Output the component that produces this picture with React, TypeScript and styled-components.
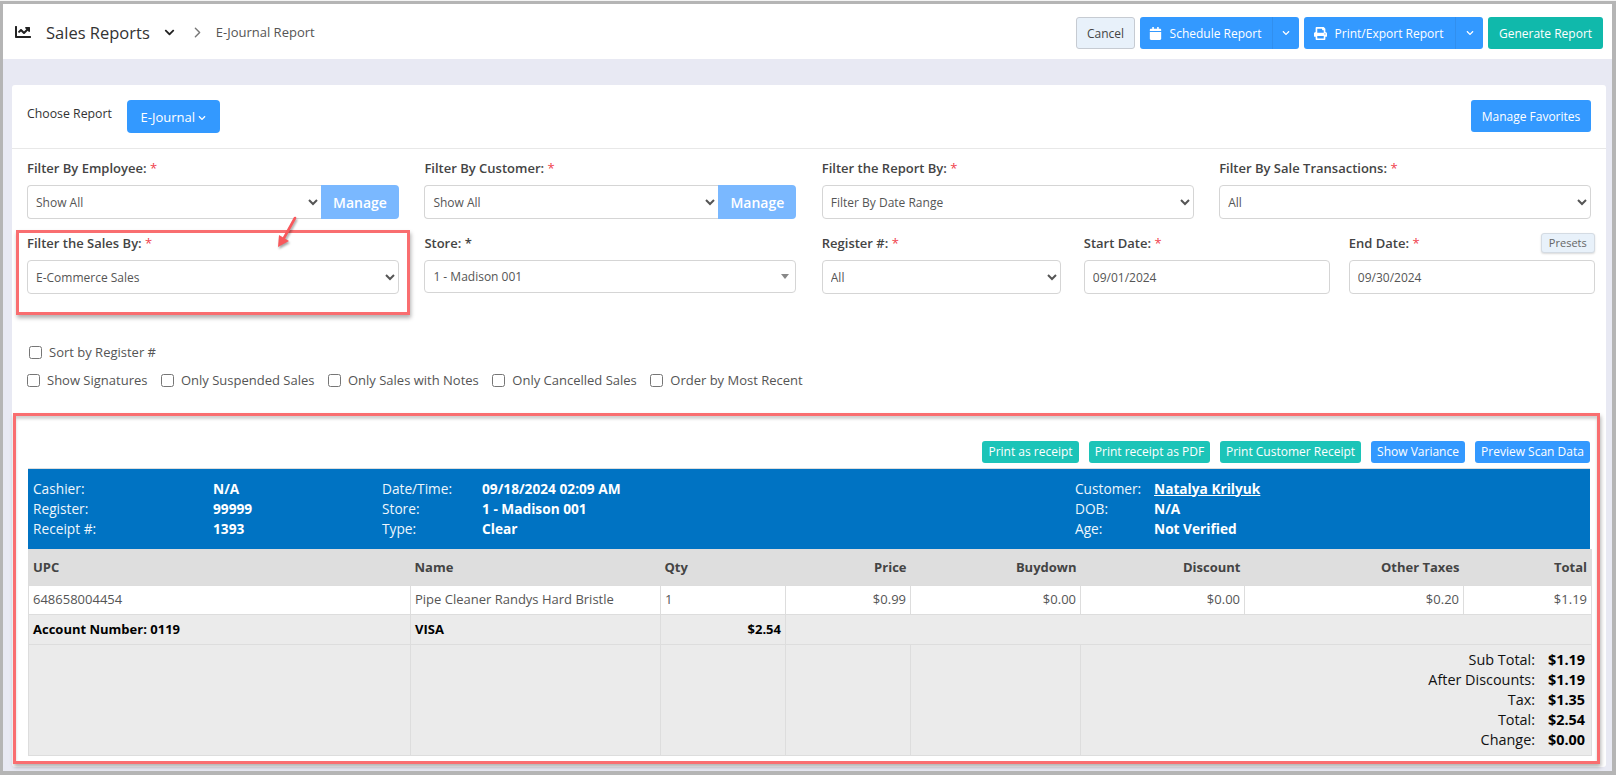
import styled, { createGlobalStyle } from 'styled-components'
import { FaCalendar, FaChartLine, FaChevronDown, FaPrint } from 'react-icons/fa'
import { ChevronRight } from 'lucide-react'

const GlobalStyle = createGlobalStyle`
  * {
    box-sizing: border-box;
  }
  html, body {
    margin: 0;
    padding: 0;
    font-family: 'Open Sans', 'Liberation Sans', sans-serif;
    font-size: 13px;
    color: #444;
    background: #f4f4f4;
  }
`

const BLUE = '#3399ff'

const ReceiptButtons = [
  { label: 'Print as receipt', kind: 'teal', width: 97 },
  { label: 'Print receipt as PDF', kind: 'teal', width: 121 },
  { label: 'Print Customer Receipt', kind: 'teal', width: 141 },
  { label: 'Show Variance', kind: 'blue', width: 94 },
  { label: 'Preview Scan Data', kind: 'blue', width: 115 },
]

const infoRows = [
  ['Cashier:', 'N/A', 'Date/Time:', '09/18/2024 02:09 AM', 'Customer:', 'Natalya Krilyuk'],
  ['Register:', '99999', 'Store:', '1 - Madison 001', 'DOB:', 'N/A'],
  ['Receipt #:', '1393', 'Type:', 'Clear', 'Age:', 'Not Verified'],
]

const totals = [
  ['Sub Total:', '$1.19'],
  ['After Discounts:', '$1.19'],
  ['Tax:', '$1.35'],
  ['Total:', '$2.54'],
  ['Change:', '$0.00'],
]

const LabelText = (props: any) => {
  const { text, required, black } = props
  return (
    <FieldLabel>
      {text} {required && <Star>*</Star>}
      {black && <span>*</span>}
    </FieldLabel>
  )
}

const SelectField = (props: any) => {
  const { label, value, manage } = props
  return (
    <div>
      <LabelText text={label} required />
      <SelectRow>
        <NativeSelect $joined={manage} defaultValue={value}>
          <option>{value}</option>
        </NativeSelect>
        {manage && <ManageButton>Manage</ManageButton>}
      </SelectRow>
    </div>
  )
}

const DateField = (props: any) => {
  const { label, value, presets } = props
  return (
    <DateWrap>
      <LabelText text={label} required />
      {presets && <PresetsButton>Presets</PresetsButton>}
      <DateInput readOnly value={value} />
    </DateWrap>
  )
}

const Check = (props: any) => {
  return (
    <CheckLabel>
      <input type="checkbox" />
      <span>{props.label}</span>
    </CheckLabel>
  )
}

const App = () => {
  return (
    <Page>
      <GlobalStyle />
      <Header>
        <TitleGroup>
          <FaChartLine size={16} color="#222" />
          <Title>Sales Reports</Title>
          <FaChevronDown size={11} color="#222" />
          <Crumb>
            <ChevronRight size={17} color="#777" strokeWidth={2} />
          </Crumb>
          <CrumbText>E-Journal Report</CrumbText>
        </TitleGroup>
        <HeaderActions>
          <CancelButton>Cancel</CancelButton>
          <SplitButton>
            <SplitMain $width={132}>
              <FaCalendar size={13} />
              Schedule Report
            </SplitMain>
            <SplitCaret $width={27}>
              <FaChevronDown size={8} />
            </SplitCaret>
          </SplitButton>
          <SplitButton>
            <SplitMain $width={151}>
              <FaPrint size={13} />
              Print/Export Report
            </SplitMain>
            <SplitCaret $width={28}>
              <FaChevronDown size={8} />
            </SplitCaret>
          </SplitButton>
          <GenerateButton>Generate Report</GenerateButton>
        </HeaderActions>
      </Header>

      <Main>
        <Card>
          <ChooseBar>
            <ChooseLeft>
              <ChooseText>Choose Report</ChooseText>
              <ChooseButton>
                E-Journal <FaChevronDown size={8} />
              </ChooseButton>
            </ChooseLeft>
            <FavoritesButton>Manage Favorites</FavoritesButton>
          </ChooseBar>

          <FilterGrid>
            <SelectField label="Filter By Employee:" value="Show All" manage />
            <SelectField label="Filter By Customer:" value="Show All" manage />
            <SelectField label="Filter the Report By:" value="Filter By Date Range" />
            <SelectField label="Filter By Sale Transactions:" value="All" />

            <HighlightField>
              <SelectField label="Filter the Sales By:" value="E-Commerce Sales" />
              <Highlight />
              <Arrow width="24" height="34" viewBox="0 0 24 34">
                <path d="M20 2 L9 22" stroke="#f8585c" strokeWidth="2.6" strokeLinecap="round" fill="none" />
                <path d="M3 31 L4 19 L14 25 Z" fill="#f8585c" />
              </Arrow>
            </HighlightField>
            <div>
              <LabelText text="Store:" black />
              <StoreSelect>
                1 - Madison 001
                <StoreCaret />
              </StoreSelect>
            </div>
            <DateRow>
              <RegisterCell>
                <SelectField label="Register #:" value="All" />
              </RegisterCell>
              <DateField label="Start Date:" value="09/01/2024" />
              <DateField label="End Date:" value="09/30/2024" presets />
            </DateRow>
          </FilterGrid>

          <SortRow>
            <Check label="Sort by Register #" />
          </SortRow>
          <OptionRow>
            <Check label="Show Signatures" />
            <Check label="Only Suspended Sales" />
            <Check label="Only Sales with Notes" />
            <Check label="Only Cancelled Sales" />
            <Check label="Order by Most Recent" />
          </OptionRow>

          <ReportBox>
            <ReceiptBar>
              {ReceiptButtons.map((item) => (
                <ReceiptButton key={item.label} $kind={item.kind} $width={item.width}>
                  {item.label}
                </ReceiptButton>
              ))}
            </ReceiptBar>

            <InfoBand>
              {infoRows.map((row) =>
                row.map((cell, index) =>
                  cell === 'Natalya Krilyuk' ? (
                    <InfoLink key={cell} href="#">
                      {cell}
                    </InfoLink>
                  ) : index % 2 === 0 ? (
                    <span key={cell}>{cell}</span>
                  ) : (
                    <InfoValue key={row[0] + cell}>{cell}</InfoValue>
                  ),
                ),
              )}
            </InfoBand>

            <ReportTable>
              <colgroup>
                <col width="382" />
                <col width="250" />
                <col width="125" />
                <col width="125" />
                <col width="170" />
                <col width="164" />
                <col width="219" />
                <col width="128" />
              </colgroup>
              <thead>
                <tr>
                  <HeadCell>UPC</HeadCell>
                  <HeadCell>Name</HeadCell>
                  <HeadCell>Qty</HeadCell>
                  <HeadCell $right>Price</HeadCell>
                  <HeadCell $right>Buydown</HeadCell>
                  <HeadCell $right>Discount</HeadCell>
                  <HeadCell $right>Other Taxes</HeadCell>
                  <HeadCell $right>Total</HeadCell>
                </tr>
              </thead>
              <tbody>
                <tr>
                  <ItemCell>648658004454</ItemCell>
                  <ItemCell>Pipe Cleaner Randys Hard Bristle</ItemCell>
                  <ItemCell>1</ItemCell>
                  <ItemCell $right>$0.99</ItemCell>
                  <ItemCell $right>$0.00</ItemCell>
                  <ItemCell $right>$0.00</ItemCell>
                  <ItemCell $right>$0.20</ItemCell>
                  <ItemCell $right>$1.19</ItemCell>
                </tr>
                <tr>
                  <PayCell>Account Number: 0119</PayCell>
                  <PayCell>VISA</PayCell>
                  <PayCell $right>$2.54</PayCell>
                  <PayCell colSpan={5} />
                </tr>
                <tr>
                  <TotalCell />
                  <TotalCell />
                  <TotalCell />
                  <TotalCell />
                  <TotalCell />
                  <TotalCell colSpan={3}>
                    <TotalsList>
                      {totals.map((item) => (
                        <TotalLine key={item[0]}>
                          <span>{item[0]}</span>
                          <strong>{item[1]}</strong>
                        </TotalLine>
                      ))}
                    </TotalsList>
                  </TotalCell>
                </tr>
              </tbody>
            </ReportTable>
          </ReportBox>
        </Card>
      </Main>
    </Page>
  )
}

export default App

const Page = styled.div`
  width: 1616px;
  height: 774px;
  margin-top: 1px;
  overflow: hidden;
  display: flex;
  flex-direction: column;
  border-style: solid;
  border-color: #b5b5b5;
  border-width: 3px 4px 4px 3px;
  background: #e8e9f3;
`

const Header = styled.header`
  height: 55px;
  flex: none;
  background: #fff;
  display: flex;
  align-items: flex-start;
  justify-content: space-between;
  padding: 13px 9px 0 12px;
`

const TitleGroup = styled.div`
  display: flex;
  align-items: center;
  height: 30px;
`

const Title = styled.span`
  font-size: 16.5px;
  color: #333;
  margin: 0 14px 0 15px;
`

const Crumb = styled.span`
  display: flex;
  margin: 0 10px 0 14px;
`

const CrumbText = styled.span`
  font-size: 13px;
  color: #555;
`

const HeaderActions = styled.div`
  display: flex;
  gap: 5px;
`

const CancelButton = styled.button`
  width: 59px;
  height: 32px;
  font: 12px 'Open Sans', sans-serif;
  color: #444;
  background: #e8f1fa;
  border: 1px solid #c6cbd2;
  border-radius: 3px;
  padding: 0;
`

const SplitButton = styled.div`
  display: flex;
  height: 32px;
  border-radius: 3px;
  overflow: hidden;
  background: ${BLUE};
  color: #fff;
`

const SplitMain = styled.div<{ $width: number }>`
  width: ${(p) => p.$width}px;
  display: flex;
  align-items: center;
  justify-content: center;
  gap: 8px;
  padding-right: 2px;
  font-size: 12px;
`

const SplitCaret = styled.div<{ $width: number }>`
  width: ${(p) => p.$width}px;
  display: flex;
  align-items: center;
  justify-content: center;
  border-left: 1px solid #318fee;
`

const GenerateButton = styled.button`
  width: 115px;
  height: 32px;
  font: 12px 'Open Sans', sans-serif;
  color: #fff;
  background: #10b9ab;
  border: 0;
  border-radius: 3px;
  padding: 0;
`

const Main = styled.main`
  flex: 1;
  min-height: 0;
  padding: 26px 6px 4px 9px;
`

const Card = styled.section`
  height: 100%;
  background: #fff;
  border-radius: 3px;
  padding: 0 15px;
`

const ChooseBar = styled.div`
  height: 64px;
  margin: 0 -15px;
  padding: 15px 15px 0;
  border-bottom: 1px solid #e8e8e8;
  display: flex;
  justify-content: space-between;
  align-items: flex-start;
`

const ChooseLeft = styled.div`
  display: flex;
  align-items: flex-start;
`

const ChooseText = styled.span`
  width: 100px;
  font-size: 12.3px;
  line-height: 28px;
  color: #333;
`

const ChooseButton = styled.button`
  width: 93px;
  height: 33px;
  font: 13px 'Open Sans', sans-serif;
  color: #fff;
  background: ${BLUE};
  border: 0;
  border-radius: 4px;
  padding: 0;
`

const FavoritesButton = styled.button`
  width: 120px;
  height: 32px;
  font: 12px 'Open Sans', sans-serif;
  color: #fff;
  background: ${BLUE};
  border: 0;
  border-radius: 3px;
  padding: 0;
`

const FilterGrid = styled.div`
  display: grid;
  grid-template-columns: repeat(4, 372px);
  column-gap: 25.4px;
  row-gap: 14px;
  padding-top: 9px;
`

const FieldLabel = styled.label`
  display: block;
  height: 20px;
  line-height: 20px;
  margin-bottom: 7px;
  font-size: 13px;
  font-weight: 600;
  color: #444;
  white-space: nowrap;
`

const Star = styled.span`
  color: #f0414c;
  font-weight: 400;
`

const SelectRow = styled.div`
  display: flex;
  height: 34px;
`

const NativeSelect = styled.select<{ $joined?: boolean }>`
  flex: 1;
  min-width: 0;
  height: 34px;
  padding: 0 4px;
  font: 12px 'Open Sans', sans-serif;
  color: #555;
  background: #fff;
  border: 1px solid #d5d5d5;
  border-radius: ${(p) => (p.$joined ? '4px 0 0 4px' : '4px')};
  border-right-width: ${(p) => (p.$joined ? 0 : 1)}px;
`

const ManageButton = styled.div`
  width: 78px;
  display: flex;
  align-items: center;
  justify-content: center;
  font-size: 14px;
  font-weight: 600;
  color: #fff;
  background: #7ab8ff;
  border-radius: 0 4px 4px 0;
`

const HighlightField = styled.div`
  position: relative;
`

const Highlight = styled.div`
  position: absolute;
  left: -11px;
  right: -11px;
  top: -3px;
  height: 85px;
  border: 3px solid #f96e70;
  box-shadow: 1px 3px 4px rgba(0, 0, 0, 0.3);
  pointer-events: none;
`

const Arrow = styled.svg`
  position: absolute;
  left: 248px;
  top: -17px;
  filter: drop-shadow(1px 2px 1px rgba(0, 0, 0, 0.35));
`

const StoreSelect = styled.div`
  position: relative;
  height: 33px;
  line-height: 31px;
  padding-left: 8px;
  font-size: 12px;
  color: #555;
  border: 1px solid #d5d5d5;
  border-radius: 4px;
`

const StoreCaret = styled.span`
  position: absolute;
  right: 6px;
  top: 13px;
  border-style: solid;
  border-width: 5px 4px 0;
  border-color: #888 transparent transparent;
`

const DateRow = styled.div`
  grid-column: span 2;
  display: flex;
`

const RegisterCell = styled.div`
  flex: none;
  width: 239px;
  margin-right: 23px;
`

const DateWrap = styled.div`
  position: relative;
  flex: none;
  width: 246px;
  margin-right: 19px;

  &:last-child {
    margin-right: 0;
  }
`

const PresetsButton = styled.div`
  position: absolute;
  right: 0;
  top: 0;
  width: 54px;
  height: 20px;
  line-height: 18px;
  text-align: center;
  font-size: 11px;
  color: #666;
  background: #e8f1fa;
  border: 1px solid #d4dbe3;
  border-radius: 3px;
  box-shadow: 0 1px 2px rgba(0, 0, 0, 0.15);
`

const DateInput = styled.input`
  display: block;
  width: 100%;
  height: 34px;
  padding: 0 8px;
  font: 12px 'Open Sans', sans-serif;
  color: #555;
  border: 1px solid #d5d5d5;
  border-radius: 4px;
  outline: 0;
`

const SortRow = styled.div`
  padding: 49px 0 0 2px;
  height: 68px;
`

const OptionRow = styled.div`
  display: flex;
  gap: 13.5px;
  height: 27px;
  padding-top: 9px;
`

const CheckLabel = styled.label`
  display: flex;
  align-items: center;
  gap: 7px;
  height: 18px;
  font-size: 13px;
  color: #555;
  white-space: nowrap;

  input {
    width: 13px;
    height: 13px;
    margin: 0;
  }
`

const ReportBox = styled.div`
  height: 351px;
  margin: 24px -9px 0 -14px;
  padding: 25px 7px 0 12px;
  border: 3px solid #f96e70;
  box-shadow: 1px 3px 4px rgba(0, 0, 0, 0.3), inset 0 3px 3px rgba(0, 0, 0, 0.18);
`

const ReceiptBar = styled.div`
  display: flex;
  justify-content: flex-end;
  gap: 10px;
  height: 22px;
  margin-bottom: 5px;
`

const ReceiptButton = styled.div<{ $kind: string; $width: number }>`
  width: ${(p) => p.$width}px;
  line-height: 22px;
  text-align: center;
  font-size: 12px;
  color: #fff;
  white-space: nowrap;
  border-radius: 3px;
  background: ${(p) => (p.$kind === 'teal' ? '#1cc4b8' : BLUE)};
`

const InfoBand = styled.div`
  display: grid;
  grid-template-columns: 180px 169px 100px 593px 79px 1fr;
  grid-auto-rows: 20px;
  align-items: center;
  height: 81px;
  padding: 9px 0 0 5px;
  font-size: 13.7px;
  color: #eef6fc;
  background: #0073c3;
  border-top: 1px solid #ddd;
`

const InfoValue = styled.span`
  font-weight: 700;
  color: #fff;
`

const InfoLink = styled.a`
  font-weight: 700;
  color: #fff;
`

const ReportTable = styled.table`
  width: 1563px;
  table-layout: fixed;
  border-collapse: collapse;
  border: 1px solid #ddd;
  font-size: 13px;
`

const HeadCell = styled.th<{ $right?: boolean }>`
  height: 36px;
  padding: 0 4px 2px;
  background: #dedede;
  color: #444;
  font-weight: 700;
  text-align: ${(p) => (p.$right ? 'right' : 'left')};
`

const ItemCell = styled.td<{ $right?: boolean }>`
  height: 29px;
  padding: 0 4px 2px;
  background: #fff;
  color: #555;
  border: 1px solid #ddd;
  text-align: ${(p) => (p.$right ? 'right' : 'left')};
`

const PayCell = styled.td<{ $right?: boolean }>`
  height: 30px;
  padding: 0 4px 2px;
  background: #ebebeb;
  color: #000;
  font-weight: 700;
  border: 1px solid #ddd;
  text-align: ${(p) => (p.$right ? 'right' : 'left')};
`

const TotalCell = styled.td`
  height: 111px;
  padding: 5px 6px 5px 5px;
  background: #ebebeb;
  border: 1px solid #ddd;
  vertical-align: top;
`

const TotalsList = styled.div`
  display: flex;
  flex-direction: column;
  align-items: flex-end;
`

const TotalLine = styled.div`
  display: flex;
  justify-content: flex-end;
  line-height: 20px;
  font-size: 14.4px;
  color: #111;

  strong {
    width: 50px;
    text-align: right;
    color: #000;
  }
`
